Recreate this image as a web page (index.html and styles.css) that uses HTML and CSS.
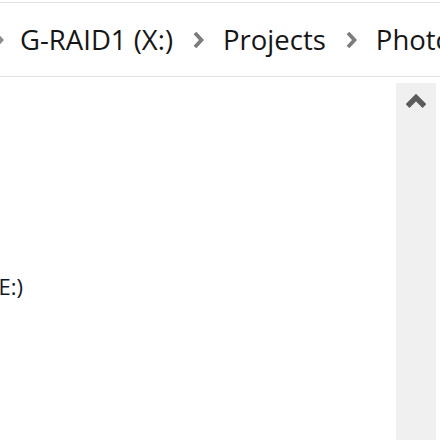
FILE: index.html
```html
<!DOCTYPE html>
<html>
<head>
<meta charset="utf-8">
<link rel="stylesheet" href="styles.css">
</head>
<body>
<div class="window">
  <div class="addressbar">
    <div class="crumbs">
      <svg class="chev first" width="11" height="18" viewBox="0 0 11 18"><path d="M2 2 L8.5 9 L2 16" fill="none" stroke="#8a8a8a" stroke-width="3.6"/></svg>
      <span class="crumb">G-RAID1 (X:)</span>
      <svg class="chev" width="11" height="18" viewBox="0 0 11 18"><path d="M2 2 L8.5 9 L2 16" fill="none" stroke="#7c7c7c" stroke-width="3.8"/></svg>
      <span class="crumb">Projects</span>
      <svg class="chev" width="11" height="18" viewBox="0 0 11 18"><path d="M2 2 L8.5 9 L2 16" fill="none" stroke="#7c7c7c" stroke-width="3.8"/></svg>
      <span class="crumb">Photos</span>
    </div>
  </div>
  <div class="main">
    <div class="tree">
      <div class="item">Local Disk (E:)</div>
    </div>
    <div class="scrollbar">
      <svg class="up" width="20" height="16" viewBox="0 0 20 16"><path d="M1.5 13 L10 4.5 L18.5 13" fill="none" stroke="#5c5c5c" stroke-width="5.4"/></svg>
    </div>
  </div>
</div>
</body>
</html>
```
FILE: styles.css
```css
html, body {
  margin: 0;
  padding: 0;
  background: #ffffff;
  width: 440px;
  height: 440px;
  overflow: hidden;
}
.window {
  padding-top: 2px;
  height: 438px;
  display: flex;
  flex-direction: column;
}
.addressbar {
  border-top: 1px solid #e3e3e3;
  border-bottom: 1px solid #e3e3e3;
  height: 73px;
  display: flex;
  align-items: center;
  overflow: hidden;
  white-space: nowrap;
}
.crumbs {
  display: flex;
  align-items: center;
  margin-left: -7px;
  font-family: "Open Sans", "Noto Sans", sans-serif;
  font-size: 27.5px;
  color: #161616;
  white-space: nowrap;
}
.crumb {
  padding: 0 20px 0 19px;
  line-height: 1;
}
.chev {
  flex: none;
  display: block;
  margin-top: 1px;
}
.chev.first {
  margin-right: -3px;
}
.main {
  flex: 1;
  display: flex;
  padding-top: 6px;
}
.tree {
  flex: 1;
  position: relative;
  overflow: hidden;
}
.item {
  position: absolute;
  top: 188px;
  right: 373px;
  font-family: "Open Sans", "Noto Sans", sans-serif;
  font-size: 22px;
  color: #101828;
  white-space: nowrap;
}
.scrollbar {
  width: 40px;
  margin-right: 4px;
  background: #f0f0f0;
  display: flex;
  justify-content: center;
  padding-top: 10px;
  box-sizing: border-box;
}
.up {
  display: block;
}
```
